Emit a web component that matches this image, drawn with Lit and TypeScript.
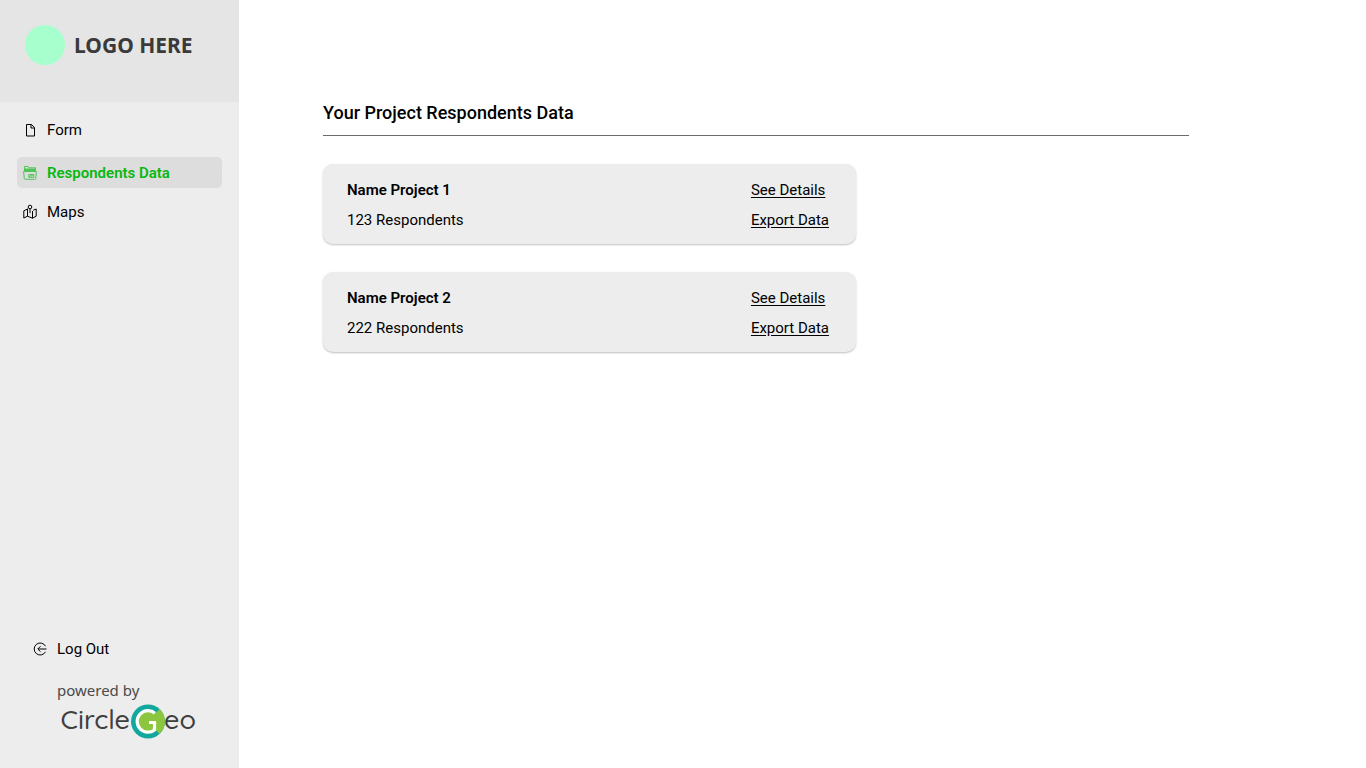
import { LitElement, html, css, svg } from "lit";
import { customElement } from "lit/decorators.js";
import { classMap } from "lit/directives/class-map.js";

const formIcon = svg`<path d="M3.500 1.500h5l3 3v8.500h-8z"/><path d="M8 1.500v3.500h3.500"/>`;
const folderIcon = svg`
  <path d="M1.500 5V.5h3.500l1 1.300h6.500V5"/>
  <path d="M1.500 2.500h11v2.500h-11z" fill="currentColor" stroke="none"/>
  <path d="M.6 5.500h12.800L12.700 12.500q0 .8-.8.8H2.100q-.8 0-.8-.8z"/>
  <path d="M5.800 8.500h5v2.800h-5z"/><path d="M6.500 10.500l1.500-1 1 .7 1-1"/>`;
const mapIcon = svg`
  <path d="M5 4.300 4.500 4 .800 5.800v7.200l3.700-1.800 5 2 3.700-2V4l-3 1.200"/>
  <path d="M4.500 4v7.200M9.500 6v7.200"/>
  <circle cx="7" cy="2" r="1.800"/><path d="M7 3.800v4.400"/>`;
const logoutIcon = svg`
  <path d="M12.500 4.200A6 6 0 1 0 12.500 9.800"/><path d="M13.500 7H5M7.500 4.300 4.800 7l2.700 2.700"/>`;

const icon = (shape: unknown) =>
  html`<svg class="icon" viewBox="0 0 14 14" aria-hidden="true">${shape}</svg>`;

const navItems = [
  { label: "Form", shape: formIcon, active: false },
  { label: "Respondents Data", shape: folderIcon, active: true },
  { label: "Maps", shape: mapIcon, active: false },
];

const projects = [
  { name: "Name Project 1", respondents: 123 },
  { name: "Name Project 2", respondents: 222 },
];

@customElement("app-sidebar")
class AppSidebar extends LitElement {
  static styles = css`
    :host {
      display: flex;
      flex-direction: column;
      background: #ededed;
      color: #000;
    }
    a { color: inherit; text-decoration: none; }
    .brand {
      display: flex;
      align-items: flex-start;
      gap: 9px;
      padding: 25px 25px 37px;
      background: #e5e5e5;
    }
    .dot { width: 40px; height: 40px; border-radius: 50%; background: #a8ffce; }
    .brand-name {
      font: 700 21px/40px "Noto Sans", sans-serif;
      color: #3a3a3a;
    }
    nav {
      display: flex;
      flex-direction: column;
      gap: 8px;
      padding: 12px 17px;
    }
    .item {
      display: flex;
      align-items: center;
      gap: 10px;
      height: 31px;
      padding: 0 6px;
      border-radius: 5px;
    }
    .item.active {
      margin-top: 4px;
      background: #dddddd;
      color: #06b811;
      font-weight: 600;
    }
    .icon {
      width: 14px;
      height: 14px;
      flex: none;
      fill: none;
      stroke: currentColor;
      stroke-width: 1;
      overflow: visible;
    }
    .active .icon { opacity: 0.65; }
    footer { margin-top: auto; padding: 0 33px 28px; }
    .logout { display: flex; align-items: center; gap: 10px; height: 24px; }
    .powered {
      margin: 17px 0 1px 24px;
      font: 400 15px/24px "Noto Sans", sans-serif;
      color: #4a4a4a;
    }
    .geo { display: block; width: 140px; height: 37px; margin-left: 24px; }
    .geo text { font: 500 27px Quicksand, Comfortaa, Lato, sans-serif; fill: #3f3f3f; }
  `;

  render() {
    return html`
      <div class="brand">
        <span class="dot"></span><span class="brand-name">LOGO HERE</span>
      </div>
      <nav aria-label="Main">
        ${navItems.map(
          (n) => html`<a class=${classMap({ item: true, active: n.active })} href="#">
            ${icon(n.shape)}<span>${n.label}</span></a>`
        )}
      </nav>
      <footer>
        <a class="logout" href="#">${icon(logoutIcon)}<span>Log Out</span></a>
        <p class="powered">powered by</p>
        <svg class="geo" viewBox="0 0 140 37" role="img" aria-label="CircleGeo">
          <text x="73" y="26" text-anchor="end">Circle</text>
          <circle cx="91" cy="18.500" r="17" fill="#12a89d"/>
          <path d="M91 18.500 102.500 6A17 17 0 0 1 102.500 31z" fill="#8cc63f"/>
          <circle cx="91" cy="18.500" r="10" fill="#8cc63f"/>
          <path d="M98 10.200A10.800 10.800 0 1 0 97.500 27V19.500H92" fill="none" stroke="#fff" stroke-width="3.200"/>
          <text x="107" y="26">eo</text>
        </svg>
      </footer>
    `;
  }
}

@customElement("app-root")
class AppRoot extends LitElement {
  static styles = css`
    :host {
      display: grid;
      grid-template-columns: 239px 1fr;
      min-height: 100vh;
      background: #fff;
      color: #000;
      font: 400 15px/24px Roboto, sans-serif;
    }
    main { padding: 101px 177px 40px 84px; }
    h1 {
      margin: 0 0 28px;
      padding-bottom: 10px;
      border-bottom: 1px solid #6b6b6b;
      font-size: 18px;
      font-weight: 500;
      line-height: 24px;
    }
    .list { display: grid; gap: 28px; max-width: 533px; }
    .card {
      display: flex;
      justify-content: space-between;
      padding: 11px 27px 9px 24px;
      border-radius: 10px;
      background: #ededed;
      box-shadow: 0 1px 2px rgba(0, 0, 0, 0.25);
    }
    .col { display: flex; flex-direction: column; align-items: flex-start; }
    h2, p, .col a { margin: 0; font-size: 15px; line-height: 30px; }
    h2 { font-weight: 600; }
    .col a { color: inherit; text-underline-offset: 2px; }
  `;

  render() {
    return html`
      <app-sidebar></app-sidebar>
      <main>
        <h1>Your Project Respondents Data</h1>
        <div class="list">
          ${projects.map(
            (p) => html`<article class="card">
              <div class="col"><h2>${p.name}</h2><p>${p.respondents} Respondents</p></div>
              <div class="col"><a href="#">See Details</a><a href="#">Export Data</a></div>
            </article>`
          )}
        </div>
      </main>
    `;
  }
}
